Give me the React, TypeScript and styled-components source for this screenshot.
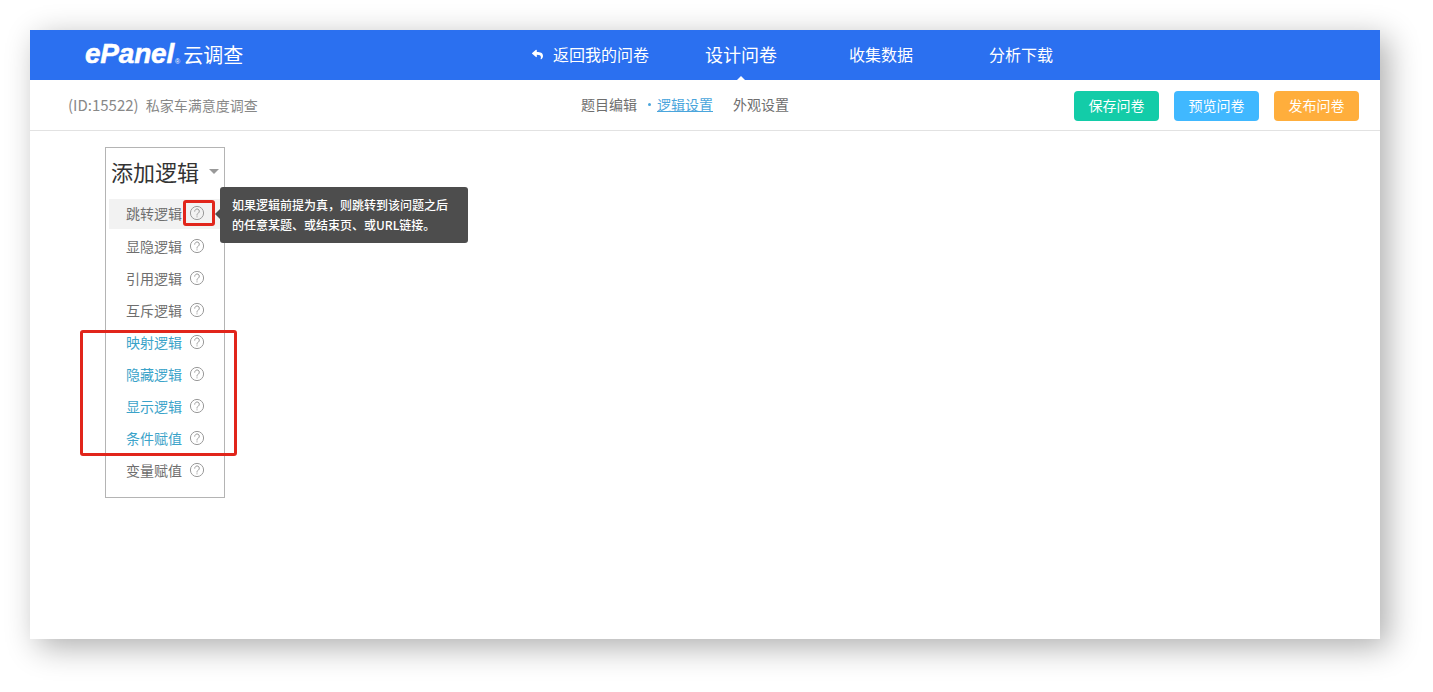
import { FaReply } from "react-icons/fa";
import styled, { createGlobalStyle } from "styled-components";

const cjk = `"Noto Sans CJK SC", "Noto Sans", sans-serif`;

const navLinks = [
  { label: "设计问卷", active: true },
  { label: "收集数据" },
  { label: "分析下载" },
];

const plainBefore = ["跳转逻辑", "显隐逻辑", "引用逻辑", "互斥逻辑"];
const marked = ["映射逻辑", "隐藏逻辑", "显示逻辑", "条件赋值"];

const HelpIcon = () => (
  <HelpSvg viewBox="0 0 16 16" width={16} height={16} fill="none" stroke="currentColor">
    <circle cx="8" cy="8" r="6.6" />
    <path d="M5.7 6.2a2.3 2.3 0 1 1 3.6 1.9c-.9.6-1.3 1-1.3 2" strokeLinecap="round" />
    <circle cx="8" cy="11.8" r="0.6" fill="currentColor" stroke="none" />
  </HelpSvg>
);

const App = () => {
  return (
    <Page>
      <GlobalStyle />
      <Frame>
        <Header>
          <Logo>
            <LogoMark>
              ePanel<LogoReg>®</LogoReg>
            </LogoMark>
            <LogoName>云调查</LogoName>
          </Logo>
          <Nav>
            <BackLink>
              <FaReply size={11} />
              返回我的问卷
            </BackLink>
            {navLinks.map((item) => (
              <NavLink key={item.label} $active={item.active}>
                {item.label}
              </NavLink>
            ))}
          </Nav>
        </Header>
        <SubBar>
          <SurveyTitle>
            <SurveyId>(ID:15522)</SurveyId>私家车满意度调查
          </SurveyTitle>
          <Steps>
            <Step>题目编辑</Step>
            <StepDot />
            <Step $active>逻辑设置</Step>
            <Step $last>外观设置</Step>
          </Steps>
          <Actions>
            <ActionButton $color="#13cca8">保存问卷</ActionButton>
            <ActionButton $color="#40b8ff">预览问卷</ActionButton>
            <ActionButton $color="#ffae3c">发布问卷</ActionButton>
          </Actions>
        </SubBar>
        <Content>
          <LogicMenu>
            <MenuTitle>
              添加逻辑
              <Caret />
            </MenuTitle>
            {plainBefore.map((label, i) => (
              <MenuItem key={label} $selected={i === 0}>
                {label}
                <HelpIcon />
                {i === 0 && (
                  <>
                    <HelpMark />
                    <Tooltip>
                      如果逻辑前提为真，则跳转到该问题之后
                      <br />
                      的任意某题、或结束页、或URL链接。
                    </Tooltip>
                  </>
                )}
              </MenuItem>
            ))}
            <MarkedGroup>
              {marked.map((label) => (
                <MenuItem key={label} $link>
                  {label}
                  <HelpIcon />
                </MenuItem>
              ))}
            </MarkedGroup>
            <MenuItem>
              变量赋值
              <HelpIcon />
            </MenuItem>
          </LogicMenu>
        </Content>
      </Frame>
    </Page>
  );
};

export default App;

const GlobalStyle = createGlobalStyle`
  html, body {
    margin: 0;
    background: #fff;
  }
  body {
    font-family: ${cjk};
  }
  *, *::before, *::after {
    box-sizing: border-box;
  }
`;

const Page = styled.div`
  height: 692px;
  padding: 30px 0 0 30px;
  overflow: hidden;
`;

const Frame = styled.div`
  width: 1349.5px;
  height: 609px;
  background: #fff;
  box-shadow: 8px 8px 30px rgba(0, 0, 0, 0.32);
`;

const Header = styled.header`
  display: flex;
  align-items: center;
  height: 50px;
  padding-left: 55px;
  background: #2b70f0;
  color: #fff;
`;

const Logo = styled.div`
  display: flex;
  align-items: center;
  width: 447px;
  padding-bottom: 2px;
`;

const LogoMark = styled.span`
  font-family: "Liberation Sans", sans-serif;
  font-size: 28px;
  font-weight: 700;
  font-style: italic;
  letter-spacing: -0.2px;
  -webkit-text-stroke: 0.5px #fff;
`;

const LogoReg = styled.sup`
  margin-left: 1px;
  font-size: 7px;
  font-style: normal;
  font-weight: 400;
  vertical-align: -1px;
  letter-spacing: 0;
  -webkit-text-stroke: 0;
`;

const LogoName = styled.span`
  margin-left: 3px;
  font-size: 20px;
`;

const Nav = styled.nav`
  display: flex;
  align-items: center;
  height: 100%;
`;

const BackLink = styled.a`
  display: flex;
  align-items: center;
  gap: 10px;
  width: 173px;
  padding-bottom: 2px;
  font-size: 16px;
`;

const NavLink = styled.a<{ $active?: boolean }>`
  position: relative;
  display: flex;
  align-items: center;
  height: 100%;
  padding-bottom: 2px;
  margin-right: ${(p) => (p.$active ? "72px" : "76px")};
  font-size: ${(p) => (p.$active ? "18px" : "16px")};

  &::after {
    content: "";
    display: ${(p) => (p.$active ? "block" : "none")};
    position: absolute;
    left: 50%;
    bottom: 0;
    margin-left: -4px;
    border: 4px solid transparent;
    border-top: 0;
    border-bottom-color: #fff;
  }
`;

const SubBar = styled.div`
  display: flex;
  align-items: center;
  height: 51px;
  padding: 0 20.5px 0 38px;
  border-bottom: 1px solid #e2e2e2;
`;

const SurveyTitle = styled.div`
  width: 513px;
  padding-bottom: 2px;
  font-size: 14px;
  color: #888;
`;

const SurveyId = styled.span`
  margin-right: 7px;
  font-size: 15px;
`;

const Steps = styled.div`
  display: flex;
  align-items: center;
  padding-bottom: 2px;
  font-size: 14px;
`;

const Step = styled.a<{ $active?: boolean; $last?: boolean }>`
  margin-left: ${(p) => (p.$last ? "20px" : "0")};
  color: ${(p) => (p.$active ? "#4aa5dc" : "#6e6e6e")};
  text-decoration: ${(p) => (p.$active ? "underline" : "none")};
`;

const StepDot = styled.i`
  width: 3px;
  height: 3px;
  margin: 0 6px 0 11px;
  border-radius: 50%;
  background: #4aa5dc;
`;

const Actions = styled.div`
  display: flex;
  gap: 15px;
  margin: 2px 0 0 auto;
`;

const ActionButton = styled.button<{ $color: string }>`
  width: 85px;
  height: 30px;
  padding: 0 0 2px;
  border: none;
  border-radius: 4px;
  background: ${(p) => p.$color};
  color: #fff;
  font-family: ${cjk};
  font-size: 14px;
`;

const Content = styled.main`
  padding: 16px 0 0 75px;
`;

const LogicMenu = styled.aside`
  width: 120px;
  height: 351px;
  padding: 0 3px;
  border: 1px solid #b4b4b4;
`;

const MenuTitle = styled.h3`
  display: flex;
  align-items: center;
  height: 51px;
  margin: 0;
  padding: 0 0 6px 2px;
  font-size: 22px;
  font-weight: 400;
  color: #333;
`;

const Caret = styled.i`
  margin: 2px 0 0 10px;
  border: 5px solid transparent;
  border-top-color: #999;
  border-bottom: 0;
`;

const MenuItem = styled.div<{ $selected?: boolean; $link?: boolean }>`
  position: relative;
  display: flex;
  align-items: center;
  width: 111px;
  height: ${(p) => (p.$selected ? "30px" : "32px")};
  margin-bottom: ${(p) => (p.$selected ? "2px" : "0")};
  padding: 0 0 2px 17px;
  background: ${(p) => (p.$selected ? "#f2f2f2" : "transparent")};
  color: ${(p) => (p.$link ? "#3ba3c9" : "#6e6e6e")};
  font-size: 14px;
`;

const HelpSvg = styled.svg`
  margin-left: 6.5px;
  color: #9a9a9a;
`;

const HelpMark = styled.span`
  position: absolute;
  left: 74px;
  top: 1px;
  width: 32px;
  height: 26px;
  border: 3px solid #e1251b;
  border-radius: 3px;
`;

const Tooltip = styled.div`
  position: absolute;
  left: 111px;
  top: -12px;
  z-index: 2;
  width: 248px;
  height: 56px;
  padding: 8px 0 0 12px;
  border-radius: 3px;
  background: #4d4d4d;
  color: #fff;
  font-size: 12px;
  font-weight: 500;
  line-height: 20px;
  white-space: nowrap;

  &::before {
    content: "";
    position: absolute;
    left: -5px;
    top: 22px;
    border: 5px solid transparent;
    border-left: 0;
    border-right-color: #4d4d4d;
  }
`;

const MarkedGroup = styled.div`
  position: relative;

  &::after {
    content: "";
    position: absolute;
    left: -29px;
    top: 3px;
    width: 157px;
    height: 126px;
    border: 3px solid #e1251b;
    border-radius: 3px;
    pointer-events: none;
  }
`;
